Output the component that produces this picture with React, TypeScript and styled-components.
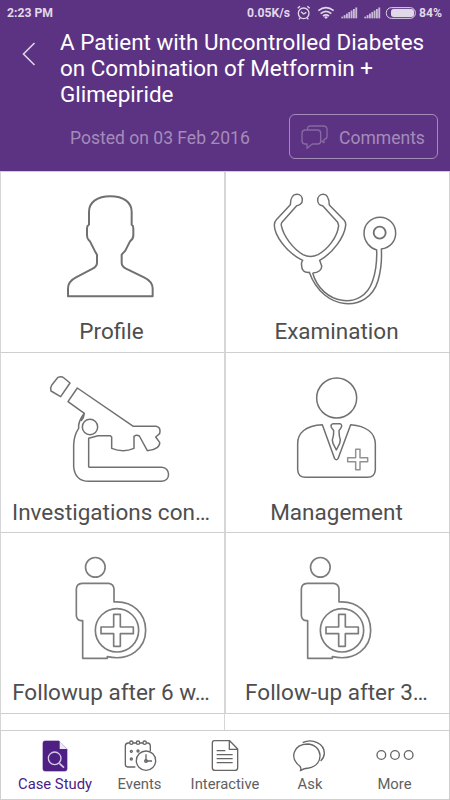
import React from "react";
import styled, { createGlobalStyle } from "styled-components";

const Global = createGlobalStyle`
  * { box-sizing: border-box; }
  body { margin: 0; background: #fff; font-family: Roboto, "Liberation Sans", sans-serif; }
`;

const Screen = styled.div`
  width: 450px;
  height: 800px;
  display: flex;
  flex-direction: column;
  overflow: hidden;
  background: #fff;
`;

const Header = styled.header`
  height: 171px;
  flex: none;
  background: #5c3383;
  color: #fff;
`;

const StatusBar = styled.div`
  height: 26px;
  padding: 0 8px 0 7px;
  display: flex;
  align-items: center;
  justify-content: space-between;
  color: #e0d8e8;
  font-size: 12.2px;
  font-weight: 700;
  line-height: 26px;
`;

const StatusRight = styled.div`
  display: flex;
  align-items: center;
`;

const StatusIcons = styled.svg`
  width: 119px;
  height: 16px;
  margin: 0 3px 0 7px;
`;

const TitleRow = styled.div`
  display: flex;
  height: 82px;
  padding-left: 22px;
`;

const BackIcon = styled.svg`
  width: 14px;
  height: 24px;
  margin: 16px 24px 0 0;
`;

const Title = styled.h1`
  margin: 3px 0 0;
  font-size: 22.45px;
  font-weight: 400;
  line-height: 26px;
  white-space: nowrap;
`;

const MetaRow = styled.div`
  display: flex;
  justify-content: space-between;
  align-items: center;
  height: 45px;
  margin: 6px 12px 0 70px;
  font-size: 17.55px;
  color: #a48cba;
`;

const PostedOn = styled.span`
  padding-top: 2px;
`;

const CommentsButton = styled.button`
  display: flex;
  align-items: center;
  gap: 11px;
  width: 149px;
  height: 45px;
  padding: 2px 0 0 11px;
  border: 1px solid #a48cba;
  border-radius: 6px;
  background: none;
  color: inherit;
  font: inherit;
`;

const CommentsIcon = styled.svg`
  width: 27px;
  height: 24px;
  margin-bottom: 2px;
`;

const Grid = styled.main`
  flex: none;
  display: grid;
  grid-template-columns: 225px 225px;
  grid-template-rows: 181px 180px 181px 17px;
  border-right: 1px solid #d2d2d2;
`;

const Cell = styled.section`
  display: flex;
  flex-direction: column;
  border-top: 1px solid #cfcfcf;
  border-left: 1px solid #d6d6d6;
  overflow: hidden;

  &:nth-child(odd) {
    border-right: 1px solid #d6d6d6;
  }

  &:last-child {
    border-left: 0;
  }
`;

const CellArt = styled.svg`
  flex: none;
  width: 224px;
  height: 140px;
  fill: none;
  stroke: #707070;
  stroke-width: 4.5;
  stroke-linejoin: round;
`;

const CellLabel = styled.div<{ $shift?: number }>`
  margin-top: 5px;
  padding-right: ${(p) => p.$shift ?? 3}px;
  text-align: center;
  white-space: nowrap;
  font-size: 22.5px;
  line-height: 28px;
  color: #4e4e4e;
`;

const TabBar = styled.nav`
  height: 70px;
  flex: none;
  display: grid;
  grid-template-columns: 108px 61px 110px 60px 109px;
  border: 1px solid #cfcfcf;
`;

const Tab = styled.div<{ $active?: boolean }>`
  display: flex;
  flex-direction: column;
  align-items: center;
  padding-top: 7px;
  font-size: 14.8px;
  line-height: 18px;
  white-space: nowrap;
  color: ${(p) => (p.$active ? "#4b1c86" : "#606060")};
`;

const TabIcon = styled.svg`
  flex: none;
  width: 40px;
  height: 36px;
  margin-bottom: 1px;
  fill: none;
  stroke: #666;
  stroke-width: 4;
  stroke-linejoin: round;
`;

const ProfileArt = () => (
  <g transform="translate(150 0)" strokeWidth="6">
    <path d="M54 349V326Q54 304 78 292L128 266Q141 259 141 248V224L134 212L120 184L116 180Q111 175 111 166V145Q111 137 117 134V96C117 66 142 49 181 49C220 49 245 66 245 96V134Q250 137 250 145V166Q250 178 240 184L226 212L215 224V248Q215 259 228 266L282 292Q308 304 308 326V349Z" />
  </g>
);

const StethoscopeArt = () => (
  <g transform="translate(105 0)">
    <path d="M158 279C184 373 307 396 338 302C350 268 351 240 350 210C330 204 312 184 312 160C312 132 334 112 360 112C386 112 407 132 407 160C407 184 390 203 364 207C366 240 364 268 354 302C324 401 189 394 148 277C132 279 124 269 125 256C123 249 125 245 128 241C77 217 43 164 43 135C43 128 44 124 49 119L91 74C91 55 99 43 111 43C121 43 127 51 127 60C127 70 119 77 110 77L66 127Q63 130 64 137C71 170 100 207 129 224Q151 235 174 224C204 207 232 172 236 137L233 127L188 77C179 77 173 69 173 60C173 50 180 43 190 43C202 43 207 55 208 75L252 120Q258 126 257 137C253 171 220 218 179 241L185 258C186 269 176 278 158 279" />
    <circle cx="359" cy="158" r="18" strokeWidth="5.5" />
  </g>
);

const MicroscopeArt = () => (
  <g>
    <path d="M210 66L192 51Q184 45 174 49L156 71Q150 80 153 90L182 107Z" />
    <path d="M243 180Q252 171 253 157L204 122L232 81L400 196H468Q480 198 480 210L479 218L467 228L479 244Q481 264 442 269L418 225Q410 220 402 226V262Q370 276 335 262V228L331 224H294L266 232V317L268 319H485C512 320 513 360 485 361H266Q226 361 221 318V252Q222 222 236 202Q234 181 253 157" />
    <circle cx="270" cy="198" r="23" />
  </g>
);

const DoctorArt = () => (
  <g>
    <circle cx="335" cy="111" r="60" />
    <path d="M292 191C241 193 218 217 218 248V326Q219 349 242 349H427Q450 348 451 326V248C450 217 426 195 377 191L339 293Q334 300 329 293Z" />
    <path d="M324 188H345Q354 192 347 202L342 209Q342 226 346 237L344 247L334 267L324 247L322 237Q327 224 326 209L319 199Q316 190 324 188Z" />
    <path stroke="#929292" d="M392 265H405V290H428V302H405V326H392V302H368V290H392Z" />
  </g>
);

const FollowArt = () => (
  <g stroke="#7c7c7c" strokeWidth="5">
    <circle cx="286" cy="79" r="29.5" />
    <path d="M248 352V239H242Q229 236 229 222V144Q230 128 246 127H326Q341 129 342 144V183C399 179 437 218 437 268C437 320 392 362 322 347V352Z" />
    <circle cx="351" cy="268" r="65" />
    <path d="M341 220H361V258H400V278H361V316H341V278H303V258H341Z" />
  </g>
);

const cells = [
  { label: "Profile", art: <ProfileArt />, shift: 2 },
  { label: "Examination", art: <StethoscopeArt /> },
  { label: "Investigations con…", art: <MicroscopeArt /> },
  { label: "Management", art: <DoctorArt /> },
  { label: "Followup after 6 w…", art: <FollowArt /> },
  { label: "Follow-up after 3…", art: <FollowArt /> },
];

const tabs = [
  {
    label: "Case Study",
    active: true,
    icon: (
      <g transform="translate(2 0)">
        <path d="M28 4H70L94 29V88Q94 94 88 94H28Q22 94 22 88V10Q22 4 28 4Z" fill="#4e2084" stroke="#4e2084" strokeWidth="2" />
        <path d="M72 5V28H94Z" fill="#eee8f4" stroke="none" />
        <circle cx="57" cy="56" r="19" stroke="#d7cbe3" />
        <path d="M71 71L85 84" stroke="#d7cbe3" strokeWidth="5" />
      </g>
    ),
  },
  {
    label: "Events",
    icon: (
      <>
        <path d="M46 82H23Q16 82 16 74V18Q16 11 25 10H29M39 10H49M59 10H69M79 10H84Q91 11 91 20V34" />
        <circle cx="34" cy="9" r="5" /><circle cx="54" cy="9" r="5" /><circle cx="74" cy="9" r="5" />
        <circle cx="34" cy="35" r="3" /><circle cx="54" cy="34" r="3" /><circle cx="34" cy="58" r="3" />
        <circle cx="78" cy="63" r="29" fill="#fff" />
        <path d="M78 44V66M80 64H96" />
        <circle cx="78" cy="64" r="4" />
      </>
    ),
  },
  {
    label: "Interactive",
    icon: (
      <>
        <path d="M28 3H74L98 28V84Q98 92 90 92H30Q22 92 22 84V10Q22 3 28 3ZM73 4V29H98" />
        <path d="M35 33H61M35 45H83M35 57H83M35 69H83" />
      </>
    ),
  },
  {
    label: "Ask",
    icon: (
      <>
        <path d="M38 9C66 -4 104 10 103 42Q102 55 92 64" />
        <path d="M30 80C-4 54 12 14 52 13C99 14 105 77 56 85Q42 86 31 93Q35 88 30 80Z" />
      </>
    ),
  },
  {
    label: "More",
    icon: (
      <>
        <circle cx="19" cy="46" r="13" /><circle cx="60" cy="46" r="13" /><circle cx="101" cy="46" r="13" />
      </>
    ),
  },
];

const SignalBars = ({ x }: { x: number }) => (
  <g transform={`translate(${x} 0)`} fill="#c9bdd6" stroke="none">
    {[0, 1, 2, 3, 4, 5, 6].map((i) => (
      <rect key={i} x={i * 7} y={35 - i * 4.6} width="5.5" height={5 + i * 4.6} />
    ))}
  </g>
);

export default function App() {
  return (
    <Screen>
      <Global />
      <Header>
        <StatusBar>
          <span>2:23 PM</span>
          <StatusRight>
            <span>0.05K/s</span>
            <StatusIcons viewBox="0 0 357 48" fill="none" stroke="#e0d8e8" strokeWidth="4">
              <circle cx="20" cy="25" r="16" />
              <path d="M12 20L20 27L28 22M2 10L9 4M31 4L38 10M10 38L6 43M30 38L34 43" />
              <path d="M64 17Q87 -1 110 17M71 26Q87 12 103 26M78 33Q87 26 96 33" strokeWidth="5" />
              <path d="M87 42L81 36Q87 32 93 36Z" fill="#e0d8e8" stroke="none" />
              <SignalBars x={133} />
              <SignalBars x={202} />
              <rect x="268" y="8" width="87" height="32" rx="15" strokeWidth="3" />
              <rect x="282" y="12" width="69" height="24" rx="8" fill="#e0d8e8" stroke="none" />
            </StatusIcons>
            <span>84%</span>
          </StatusRight>
        </StatusBar>
        <TitleRow>
          <BackIcon viewBox="0 0 14 24" fill="none" stroke="#ded3e8" strokeWidth="1.6">
            <path d="M12.5 1L1.5 12L12.5 23" />
          </BackIcon>
          <Title>
            A Patient with Uncontrolled Diabetes<br />
            on Combination of Metformin +<br />
            Glimepiride
          </Title>
        </TitleRow>
        <MetaRow>
          <PostedOn>Posted on 03 Feb 2016</PostedOn>
          <CommentsButton>
            <CommentsIcon viewBox="0 0 81 72" fill="none" stroke="#8869a4" strokeWidth="4" strokeLinejoin="round">
              <path d="M11 15H51Q59 16 59 24V50Q58 57 50 57H34L18 70V57H11Q3 56 3 48V23Q4 16 11 15Z" />
              <path d="M20 15V9Q21 3 28 3H70Q77 4 78 11V35Q77 43 69 43V53L60 47" />
            </CommentsIcon>
            <span>Comments</span>
          </CommentsButton>
        </MetaRow>
      </Header>
      <Grid>
        {cells.map((c) => (
          <Cell key={c.label}>
            <CellArt viewBox="3 -24 672 420">{c.art}</CellArt>
            <CellLabel $shift={c.shift}>{c.label}</CellLabel>
          </Cell>
        ))}
        <Cell />
        <Cell />
      </Grid>
      <TabBar>
        {tabs.map((t) => (
          <Tab key={t.label} $active={t.active}>
            <TabIcon viewBox="0 -5 120 108">{t.icon}</TabIcon>
            {t.label}
          </Tab>
        ))}
      </TabBar>
    </Screen>
  );
}
